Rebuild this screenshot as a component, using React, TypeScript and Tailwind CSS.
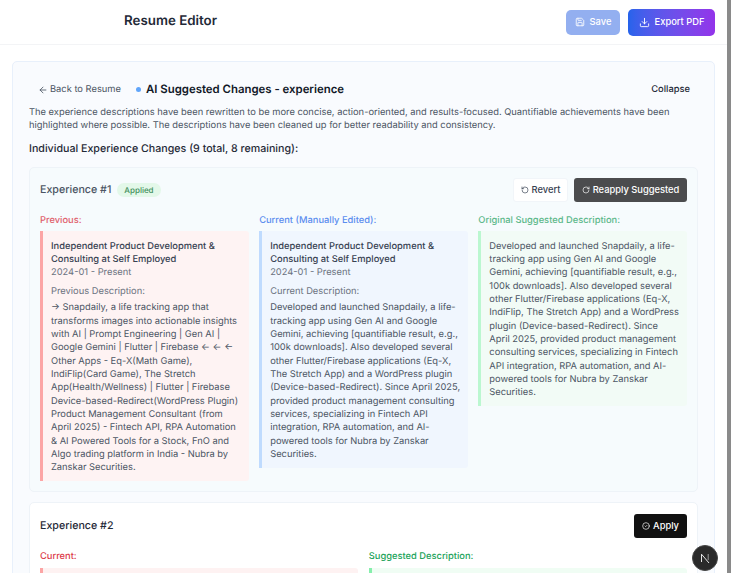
import { ArrowLeft, CircleCheck, Download, RotateCcw, RotateCw, Save } from "lucide-react";

const heading = "Independent Product Development & Consulting at Self Employed";

function Column({ label, labelClass, boxClass, desc, sub, text }: { label: string; labelClass: string; boxClass: string; desc?: boolean; sub?: string; text: string }) {
  return (
    <div className="flex-1 min-w-0">
      <div className={`text-[9.33px] leading-[13.33px] font-medium mb-[3.5px] ${labelClass}`}>{label}</div>
      <div className={`rounded-r-[3px] border-l-[3px] pl-[8px] pt-[9px] pb-[6.5px] text-[9.33px] leading-[13.33px] ${boxClass}`}>
        {desc && (
          <>
            <div className="font-medium text-[#374151]">{heading}</div>
            <div className="text-[#6b7280]">2024-01 - Present</div>
            <div className="text-[#6b7280] mt-[5.5px] mb-[3px]">{sub}</div>
          </>
        )}
        <div className="text-[#4b5563]">{text}</div>
      </div>
    </div>
  );
}

export default function App() {
  return (
    <div className="flex h-[573px] w-[731px] overflow-hidden bg-white text-[#111827] [font-family:Inter,sans-serif] [text-rendering:geometricPrecision]">
      <div className="flex-1 min-w-0 relative">
        <header className="h-[45px] border-b border-[#f3f4f6] flex items-center justify-between pl-[124px] pr-[12px]">
          <h1 className="text-[13.33px] font-semibold text-[#1f2937]">Resume Editor</h1>
          <div className="flex items-center gap-[8px]">
            <button className="h-[25px] w-[54px] rounded-[5px] bg-[#93aff0] text-white text-[9.33px] font-medium flex items-center justify-center gap-[5px]">
              <Save size={10} />Save
            </button>
            <button className="h-[27px] w-[87px] rounded-[5px] bg-gradient-to-r from-[#2563eb] to-[#9333ea] text-white text-[9.33px] font-medium flex items-center justify-center gap-[5px]">
              <Download size={11} />Export PDF
            </button>
          </div>
        </header>
        <main className="px-[12px] pt-[16px]">
          <section className="rounded-[5px] border border-[#e8f0fb] bg-[#f9fbfe] px-[16px] pt-[19px] pb-[20px]">
            <div className="flex items-center justify-between pl-[9px] pr-[8px]">
              <div className="flex items-center">
                <span className="flex items-center gap-[2px] text-[9.33px] text-[#4b5563]"><ArrowLeft size={10} />Back to Resume</span>
                <span className="ml-[15px] w-[5px] h-[5px] rounded-full bg-[#60a5fa]" />
                <h2 className="ml-[5px] text-[11.4px] font-semibold text-[#111827]">AI Suggested Changes - experience</h2>
              </div>
              <span className="text-[9.33px] font-medium text-[#1f2937]">Collapse</span>
            </div>
            <p className="mt-[8px] text-[9.33px] leading-[13.33px] text-[#4b5563]">
              The experience descriptions have been rewritten to be more concise, action-oriented, and results-focused. Quantifiable achievements have been highlighted where possible. The descriptions have been cleaned up for better readability and consistency.
            </p>
            <h3 className="mt-[8px] text-[10.67px] leading-[15px] font-medium text-[#1f2937]">Individual Experience Changes (9 total, 8 remaining):</h3>
            <article className="mt-[11px] rounded-[5px] border border-[#eef3f8] bg-[#f6fbfd] px-[10px] pt-[10px] pb-[10px]">
              <div className="flex items-center justify-between h-[24px]">
                <div className="flex items-center gap-[6px]">
                  <span className="text-[10.67px] font-medium text-[#4b5563]">Experience #1</span>
                  <span className="rounded-full bg-[#e3f8e9] px-[7px] py-[1px] text-[8px] font-medium text-[#3f8f5c]">Applied</span>
                </div>
                <div className="flex items-center gap-[6px]">
                  <button className="h-[24px] w-[55px] rounded-[3px] bg-white border border-[#f1f5f9] text-[9.33px] font-medium text-[#374151] flex items-center justify-center gap-[3px]"><RotateCcw size={8} />Revert</button>
                  <button className="h-[24px] w-[113px] rounded-[3px] bg-[#4b4c4e] text-[9.33px] font-medium text-white flex items-center justify-center gap-[3px]"><RotateCw size={8} />Reapply Suggested</button>
                </div>
              </div>
              <div className="mt-[12px] flex items-start gap-[10.5px]">
                <Column label="Previous:" labelClass="text-[#e0606c]" boxClass="pr-[6px] border-[#fca5a5] bg-[#fef3f3]" desc sub="Previous Description:" text="→ Snapdaily, a life tracking app that transforms images into actionable insights with AI | Prompt Engineering | Gen AI | Google Gemini | Flutter | Firebase ← ← ← Other Apps - Eq-X(Math Game), IndiFlip(Card Game), The Stretch App(Health/Wellness) | Flutter | Firebase Device-based-Redirect(WordPress Plugin) Product Management Consultant (from April 2025) - Fintech API, RPA Automation & AI Powered Tools for a Stock, FnO and Algo trading platform in India - Nubra by Zanskar Securities." />
                <Column label="Current (Manually Edited):" labelClass="text-[#5b8def]" boxClass="pr-[6px] border-[#bfdbfe] bg-[#f0f6fe]" desc sub="Current Description:" text="Developed and launched Snapdaily, a life-tracking app using Gen AI and Google Gemini, achieving [quantifiable result, e.g., 100k downloads]. Also developed several other Flutter/Firebase applications (Eq-X, The Stretch App) and a WordPress plugin (Device-based-Redirect). Since April 2025, provided product management consulting services, specializing in Fintech API integration, RPA automation, and AI-powered tools for Nubra by Zanskar Securities." />
                <Column label="Original Suggested Description:" labelClass="text-[#5cb88a]" boxClass="pr-[8px] border-[#bbf7d0] bg-[#f2fbf6]" text="Developed and launched Snapdaily, a life-tracking app using Gen AI and Google Gemini, achieving [quantifiable result, e.g., 100k downloads]. Also developed several other Flutter/Firebase applications (Eq-X, IndiFlip, The Stretch App) and a WordPress plugin (Device-based-Redirect). Since April 2025, provided product management consulting services, specializing in Fintech API integration, RPA automation, and AI-powered tools for Nubra by Zanskar Securities." />
              </div>
            </article>
            <article className="mt-[10px] rounded-[5px] border border-[#eef3f8] bg-white px-[10px] pt-[11px]">
              <div className="flex items-center justify-between h-[24px]">
                <span className="text-[10.67px] font-medium text-[#1f2937]">Experience #2</span>
                <button className="h-[24px] w-[53px] rounded-[3px] bg-[#111111] text-[9.33px] font-medium text-white flex items-center justify-center gap-[3px]"><CircleCheck size={8} />Apply</button>
              </div>
              <div className="mt-[12px] flex gap-[10.5px]">
                <div className="flex-1">
                  <div className="text-[9.33px] leading-[13.33px] font-medium text-[#dc3a48] mb-[4.5px]">Current:</div>
                  <div className="h-[40px] border-l-[3px] border-[#fca5a5] bg-[#fef2f2] rounded-r-[3px]" />
                </div>
                <div className="flex-1">
                  <div className="text-[9.33px] leading-[13.33px] font-medium text-[#22a35a] mb-[4.5px]">Suggested Description:</div>
                  <div className="h-[40px] border-l-[3px] border-[#86efac] bg-[#f0fdf4] rounded-r-[3px]" />
                </div>
              </div>
            </article>
          </section>
        </main>
        <div className="absolute right-[9px] top-[545px] w-[26px] h-[26px] rounded-full bg-[#2a2a2a] border border-[#444] flex items-center justify-center">
          <svg width="12" height="12" viewBox="0 0 12 12" fill="none">
            <path d="M2.5 10V2.2L10 11" stroke="#e5e5e5" strokeWidth="1" />
            <path d="M9.2 2v6" stroke="#9a9a9a" strokeWidth="1" />
          </svg>
        </div>
      </div>
      <div className="w-[4px] shrink-0 bg-[#8a8a8a]" />
    </div>
  );
}
